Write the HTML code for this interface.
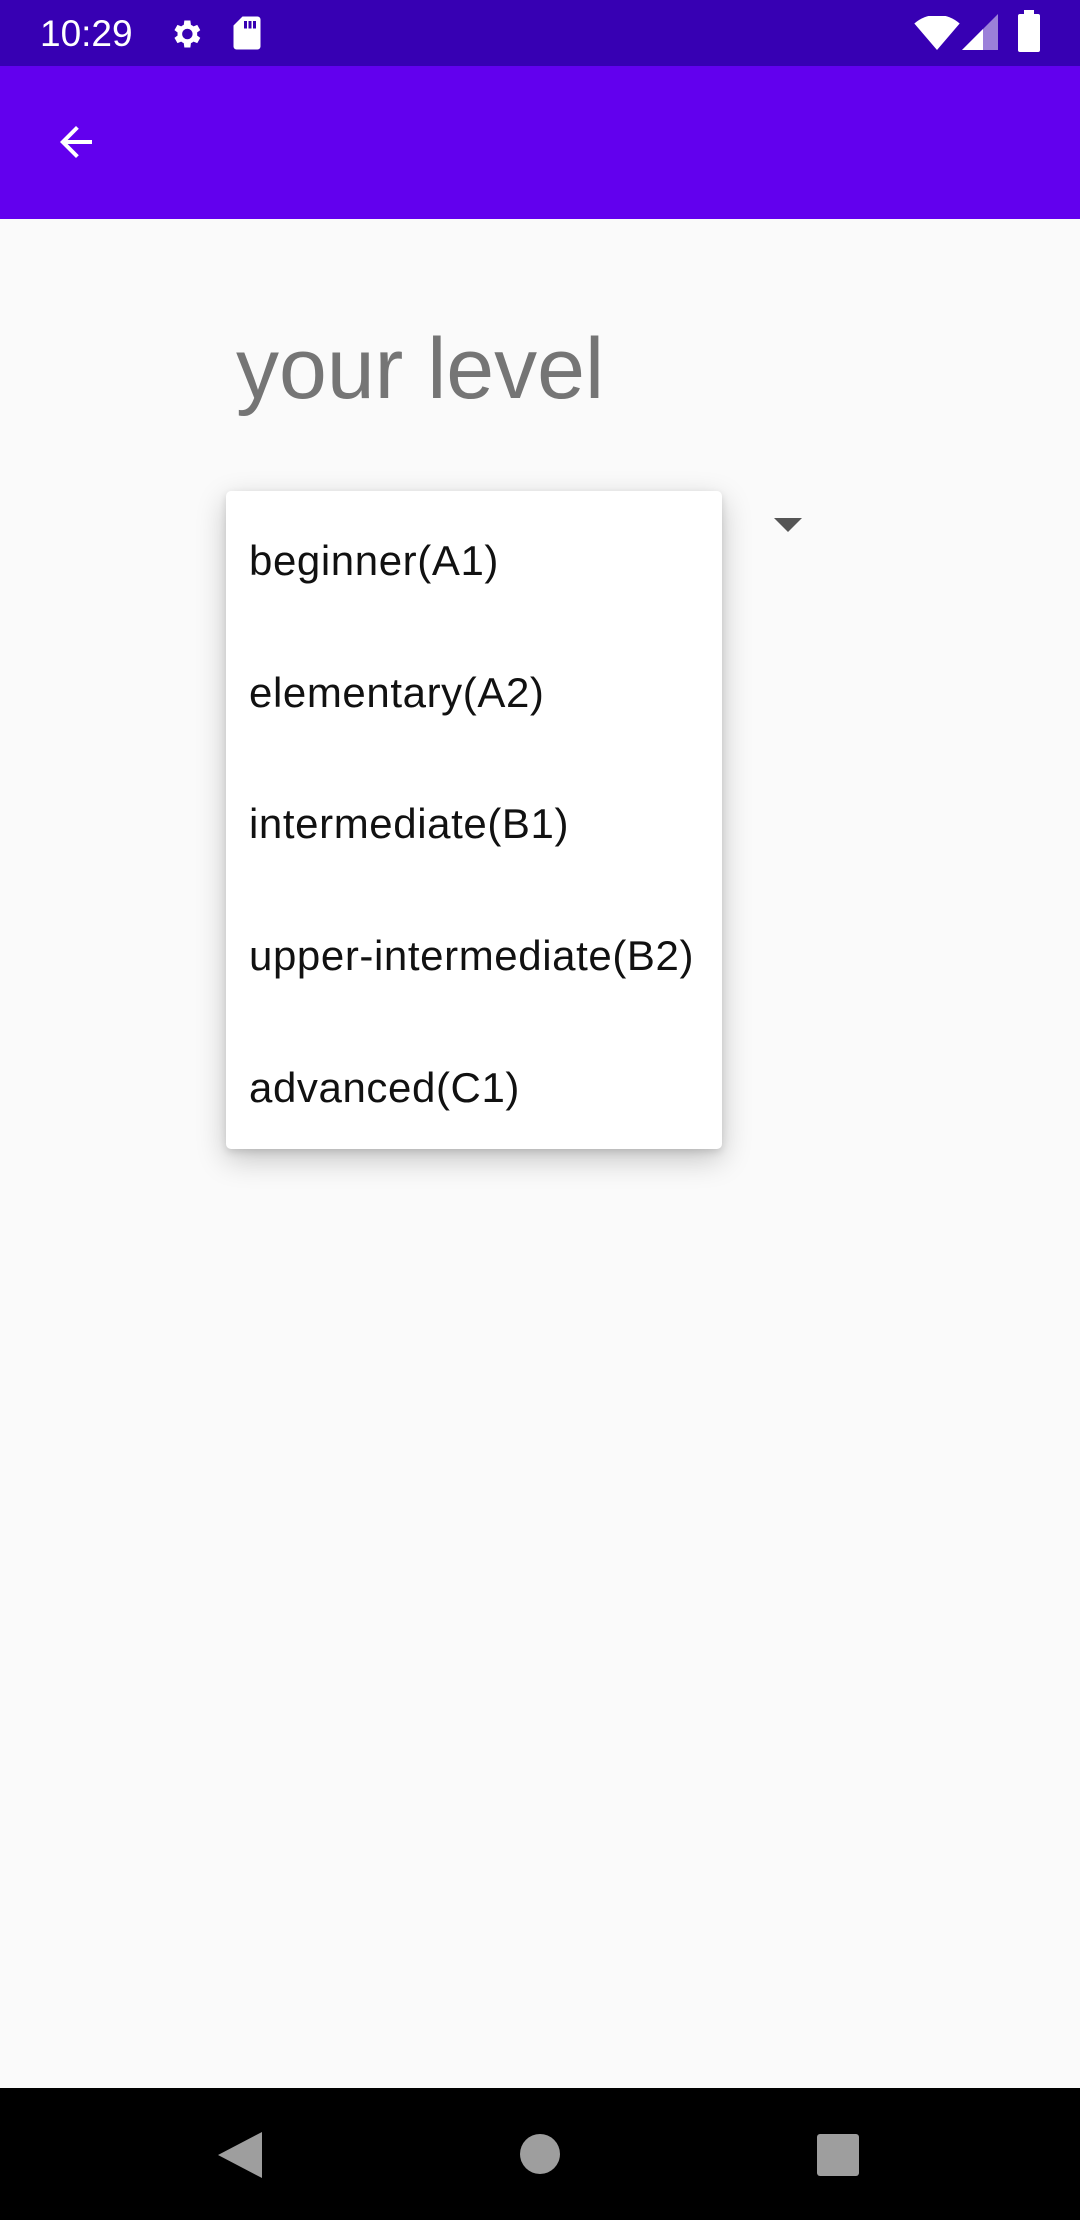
<!DOCTYPE html>
<html><head><meta charset="utf-8"><style>
*{margin:0;padding:0;box-sizing:border-box}
body{width:1080px;height:2220px;background:#fafafa;font-family:"Liberation Sans",Roboto,sans-serif;position:relative;overflow:hidden}
.status{position:absolute;left:0;top:0;width:1080px;height:66px;background:#3700b3;color:#fff}
.bar{position:absolute;left:0;top:66px;width:1080px;height:153px;background:#6200ee}
.title{position:absolute;left:236px;top:326px;font-size:86px;color:#757575;line-height:1}
.menu{position:absolute;left:226px;top:491px;width:496px;height:658px;background:#fff;border-radius:5px;box-shadow:0 10px 30px rgba(0,0,0,.22),0 3px 8px rgba(0,0,0,.12)}
.item{position:absolute;left:23px;font-size:42px;letter-spacing:0.6px;color:#111;line-height:1}
.nav{position:absolute;left:0;top:2088px;width:1080px;height:132px;background:#000}
</style></head><body>
<div class="status">
<div style="position:absolute;left:40px;top:13px;font-size:37px;font-weight:500">10:29</div>
<svg style="position:absolute;left:168px;top:16px" width="36" height="36" viewBox="0 0 24 24"><path fill="#fff" d="M19.4 13a7.5 7.5 0 000-2l2.1-1.6-2-3.5-2.5 1a7 7 0 00-1.7-1L14.9 3h-4l-.4 2.9a7 7 0 00-1.7 1l-2.5-1-2 3.5L6.4 11a7.5 7.5 0 000 2l-2.1 1.6 2 3.5 2.5-1a7 7 0 001.7 1l.4 2.9h4l.4-2.9a7 7 0 001.7-1l2.5 1 2-3.5zM12.9 15.5a3.5 3.5 0 110-7 3.5 3.5 0 010 7z"/></svg>
<svg style="position:absolute;left:232px;top:15px" width="30" height="36" viewBox="0 0 20 24"><path fill="#fff" d="M7 1h10a2 2 0 012 2v18a2 2 0 01-2 2H3a2 2 0 01-2-2V7zM8 4v5h2V4zm3 0v5h2V4zm3 0v5h2V4z"/></svg>
<svg style="position:absolute;left:914px;top:16px" width="46" height="34" viewBox="0 0 24 18"><path fill="#fff" d="M12 18L0 4a18 18 0 0124 0z"/></svg>
<svg style="position:absolute;left:962px;top:14px" width="36" height="36" viewBox="0 0 24 24"><path fill="#fff" opacity=".5" d="M24 0v24H0z"/><path fill="#fff" d="M14 10v14H0z"/></svg>
<div style="position:absolute;left:1018px;top:14px;width:22px;height:38px;background:#fff;border-radius:2px"></div>
<div style="position:absolute;left:1024px;top:10px;width:10px;height:6px;background:#fff"></div>
</div>
<div class="bar">
<svg style="position:absolute;left:52px;top:52px" width="48" height="48" viewBox="0 0 24 24"><path fill="#fff" d="M20 11H7.8l5.6-5.6L12 4l-8 8 8 8 1.4-1.4L7.8 13H20z"/></svg>
</div>
<div class="title">your level</div>
<svg style="position:absolute;left:774px;top:518px" width="28" height="14"><path d="M0 0h28L14 14z" fill="#555"/></svg>
<div class="menu">
<div class="item" style="top:49px">beginner(A1)</div>
<div class="item" style="top:181px">elementary(A2)</div>
<div class="item" style="top:312px">intermediate(B1)</div>
<div class="item" style="top:444px">upper-intermediate(B2)</div>
<div class="item" style="top:576px">advanced(C1)</div>
</div>
<div class="nav">
<svg style="position:absolute;left:218px;top:44px" width="44" height="46"><path d="M44 0v46L0 23z" fill="#9e9e9e"/></svg>
<div style="position:absolute;left:520px;top:46px;width:40px;height:40px;border-radius:50%;background:#9e9e9e"></div>
<div style="position:absolute;left:817px;top:46px;width:42px;height:42px;border-radius:3px;background:#9e9e9e"></div>
</div>
</body></html>
